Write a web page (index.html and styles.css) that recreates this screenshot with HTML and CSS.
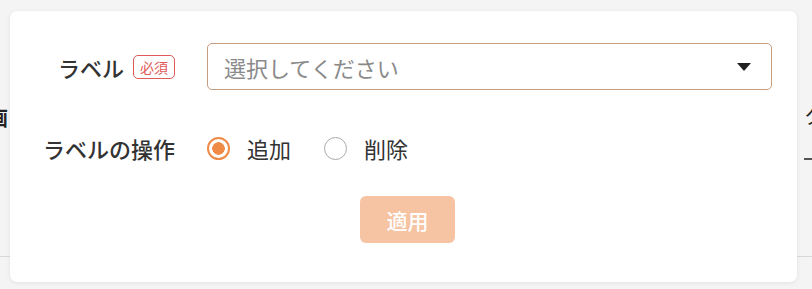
FILE: index.html
```html
<!DOCTYPE html>
<html lang="ja">
<head>
<meta charset="utf-8">
<link rel="stylesheet" href="styles.css">
</head>
<body>
<div class="page">
  <div class="page-row">
    <span class="bg-left">画</span>
    <span class="bg-right">ク</span>
  </div>
  <div class="page-line"></div>
</div>

<div class="modal">
  <div class="form">
    <div class="label">ラベル<span class="badge">必須</span></div>
    <div class="select">
      <span class="placeholder">選択してください</span>
      <span class="caret"></span>
    </div>

    <div class="label">ラベルの操作</div>
    <div class="radios">
      <label class="radio"><span class="dot on"></span>追加</label>
      <label class="radio"><span class="dot"></span>削除</label>
    </div>
  </div>
  <div class="actions">
    <button class="apply" disabled>適用</button>
  </div>
</div>
</body>
</html>
```

FILE: styles.css
```css
* { box-sizing: border-box; }
html, body { margin: 0; padding: 0; }
body {
  width: 812px;
  height: 289px;
  overflow: hidden;
  background: #f4f4f4;
  font-family: "Noto Sans CJK JP", "Noto Sans", sans-serif;
  color: #333;
  position: relative;
}
.page {
  padding-top: 104px;
}
.page-row {
  display: flex;
  justify-content: space-between;
  height: 56px;
  font-size: 20px;
  font-weight: 700;
  color: #222;
  overflow: hidden;
}
.bg-left { margin-left: -12px; line-height: 28px; }
.bg-right {
  margin-right: -14px;
  width: 22px;
  line-height: 24px;
  font-weight: 400;
  border-bottom: 2px solid #555;
  height: 56px;
}
.page-line {
  margin-top: 96px;
  height: 1px;
  background: #d8d8d8;
}
.modal {
  position: absolute;
  left: 10px;
  top: 11px;
  width: 787px;
  height: 271px;
  background: #fff;
  border-radius: 7px;
  box-shadow: 0 1px 4px rgba(0,0,0,0.08);
  padding: 32px 25px 0 0;
}
.form {
  display: grid;
  grid-template-columns: 165px 1fr;
  column-gap: 32px;
  row-gap: 42px;
  align-items: center;
}
.label {
  justify-self: end;
  display: flex;
  align-items: center;
  gap: 9px;
  font-size: 22px;
  font-weight: 500;
  color: #333;
  white-space: nowrap;
}
.badge {
  display: inline-flex;
  align-items: center;
  justify-content: center;
  width: 42px;
  height: 24px;
  border: 1.5px solid #e05a58;
  border-radius: 5px;
  color: #e05a58;
  font-size: 14px;
  font-weight: 400;
}
.select {
  height: 47px;
  border: 1.5px solid #c89c7e;
  border-radius: 5px;
  display: flex;
  align-items: center;
  justify-content: space-between;
  padding: 0 20px 0 16px;
}
.placeholder {
  font-size: 22px;
  color: #8a8a8a;
}
.caret {
  width: 0;
  height: 0;
  border-left: 7px solid transparent;
  border-right: 7px solid transparent;
  border-top: 8px solid #222;
}
.radios {
  display: flex;
  align-items: center;
  gap: 33px;
  height: 30px;
}
.radio {
  display: flex;
  align-items: center;
  gap: 17px;
  font-size: 22px;
  color: #333;
}
.dot {
  width: 23px;
  height: 23px;
  border-radius: 50%;
  border: 1.5px solid #aaa;
  background: #fff;
}
.dot.on {
  border: 2px solid #ef8a47;
  background: radial-gradient(circle, #ef8a47 0 6px, #fff 6.5px);
}
.actions {
  display: flex;
  justify-content: center;
  padding-left: 33px;
  margin-top: 32px;
}
.apply {
  width: 95px;
  height: 47px;
  border: none;
  border-radius: 6px;
  background: #f6c3a3;
  color: #fff;
  font-family: inherit;
  font-size: 21px;
  font-weight: 500;
}
```
